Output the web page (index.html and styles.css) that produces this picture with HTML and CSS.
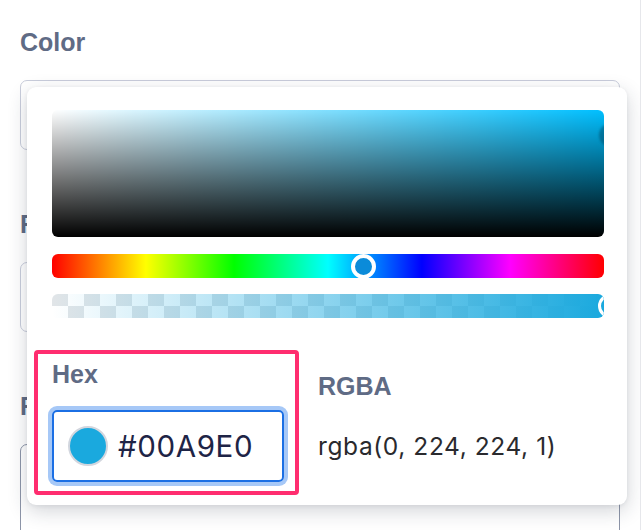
FILE: index.html
```html
<!DOCTYPE html>
<html lang="en">
<head>
<meta charset="utf-8">
<title>Color picker</title>
<link rel="stylesheet" href="styles.css">
</head>
<body>
<div class="page">
  <div class="form">
    <div class="field">
      <div class="label">Color</div>
      <div class="input"></div>
    </div>
    <div class="field">
      <div class="label">Font</div>
      <div class="input"></div>
    </div>
    <div class="field">
      <div class="label">Footer</div>
      <div class="input textarea"></div>
    </div>
  </div>

  <div class="picker">
    <div class="sat">
      <div class="sat-thumb"></div>
    </div>
    <div class="hue">
      <div class="hue-thumb"></div>
    </div>
    <div class="alpha">
      <div class="alpha-thumb"></div>
    </div>
    <div class="values">
      <div class="hex-box">
        <div class="label">Hex</div>
        <div class="hex-input">
          <span class="swatch"></span>
          <span class="hex-value">#00A9E0</span>
        </div>
      </div>
      <div class="rgba-col">
        <div class="label">RGBA</div>
        <div class="rgba-value">rgba(0, 224, 224, 1)</div>
      </div>
    </div>
  </div>
</div>
</body>
</html>
```

FILE: styles.css
```css
html, body {
  margin: 0;
  padding: 0;
  background: #ffffff;
}

body {
  font-family: "Liberation Sans", Arial, sans-serif;
}

.page {
  position: relative;
  width: 640px;
  height: 530px;
  border-right: 1px solid #e6e7eb;
  overflow: hidden;
}

.form {
  width: 600px;
  padding: 28px 0 0 20px;
  display: flex;
  flex-direction: column;
  gap: 60px;
}

.field {
  display: flex;
  flex-direction: column;
  gap: 23px;
}

.label {
  font-family: "Liberation Sans", Arial, sans-serif;
  font-weight: bold;
  font-size: 25px;
  line-height: 29px;
  color: #5f6b85;
}

.input {
  box-sizing: border-box;
  height: 70px;
  border: 1.5px solid #c9cddb;
  border-radius: 7px;
  background: #fff;
}

.textarea {
  height: 160px;
  border-color: #8d95a8;
}

.picker {
  position: absolute;
  left: 27px;
  top: 87px;
  width: 600px;
  height: 418px;
  box-sizing: border-box;
  padding: 23px 23px 0 25px;
  background: #fff;
  border-radius: 9px;
  box-shadow: 0 6px 20px rgba(30, 40, 60, 0.2), 0 1px 4px rgba(30, 40, 60, 0.07);
}

.sat {
  position: relative;
  height: 127px;
  border-radius: 6px;
  overflow: hidden;
  background:
    linear-gradient(to top, #000 0%, rgba(0, 0, 0, 0) 100%),
    linear-gradient(to right, #fff 0%, rgba(255, 255, 255, 0) 100%),
    #00bfff;
}

.sat-thumb {
  position: absolute;
  left: 547px;
  top: 13px;
  width: 24px;
  height: 24px;
  border-radius: 50%;
  background: rgba(0, 40, 60, 0.35);
  filter: blur(1px);
}

.hue {
  position: relative;
  margin-top: 17px;
  height: 24px;
  border-radius: 6px;
  background: linear-gradient(to right,
    #ff0000 0%, #ffff00 17%, #00ff00 33%, #00ffff 50%,
    #0000ff 67%, #ff00ff 83%, #ff0000 100%);
}

.hue-thumb {
  position: absolute;
  left: 299px;
  top: -0.5px;
  width: 25px;
  height: 25px;
  box-sizing: border-box;
  border: 4px solid #fff;
  border-radius: 50%;
  background: #0b8bd9;
}

.alpha {
  position: relative;
  margin-top: 16px;
  height: 24px;
  border-radius: 6px;
  overflow: hidden;
  background:
    linear-gradient(to right, rgba(0, 169, 224, 0) 0%, rgb(26, 169, 222) 100%),
    conic-gradient(#ffffff 0 25%, #e1e5e8 0 50%, #ffffff 0 75%, #e1e5e8 0) 0 -4px / 32px 32px;
}

.alpha-thumb {
  position: absolute;
  left: 546px;
  top: 0;
  width: 24px;
  height: 24px;
  box-sizing: border-box;
  border: 3.5px solid #fff;
  border-radius: 50%;
  background: rgb(26, 169, 222);
}

.values {
  display: flex;
  margin-top: 32px;
  margin-left: -18px;
}

.hex-box {
  box-sizing: border-box;
  width: 265px;
  height: 145px;
  border: 4px solid #ff2d6f;
  border-radius: 4px;
  padding: 6px 0 9px 14px;
}

.hex-input {
  box-sizing: border-box;
  width: 232px;
  height: 72px;
  margin-top: 21px;
  border: 2px solid #1b6fe4;
  border-radius: 5px;
  box-shadow: 0 0 0 4px #a6c8f7;
  display: flex;
  align-items: center;
  gap: 10px;
  padding-left: 14px;
}

.swatch {
  box-sizing: border-box;
  width: 40px;
  height: 40px;
  flex: none;
  border: 2px solid #d2d6de;
  border-radius: 50%;
  background: #1aa9de;
}

.hex-value {
  font-family: Inter, "Liberation Sans", sans-serif;
  font-size: 29.5px;
  line-height: 34px;
  letter-spacing: 0.6px;
  color: #1e2446;
}

.rgba-col {
  margin-left: 19px;
  padding-top: 22px;
}

.rgba-value {
  margin-top: 30px;
  font-family: Inter, "Liberation Sans", sans-serif;
  font-size: 24.5px;
  line-height: 30px;
  letter-spacing: 0.6px;
  color: #2a2a2e;
}
```
